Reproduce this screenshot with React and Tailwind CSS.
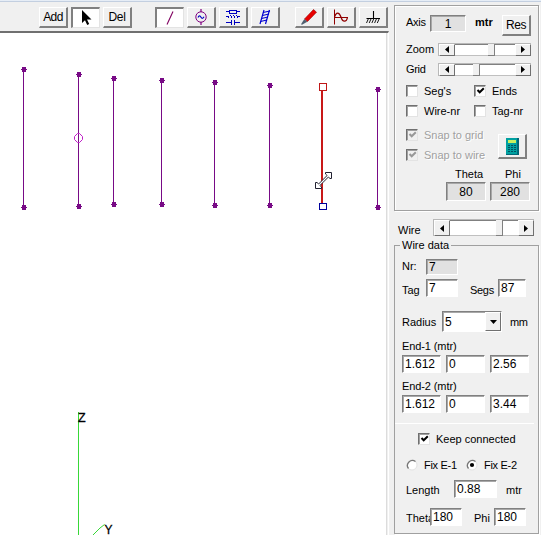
import React from 'react';

const wires = [
    { x: 24, top: 69, bottom: 207 },
    { x: 79, top: 74, bottom: 206 },
    { x: 114, top: 78, bottom: 204 },
    { x: 162, top: 80, bottom: 204 },
    { x: 215, top: 82, bottom: 205 },
    { x: 270, top: 85, bottom: 205 },
    { x: 378, top: 89, bottom: 207 },
];

const ToolButton = ({ pressed, className = '', children }) => (
    <button
        className={`flex h-[21px] w-[29px] shrink-0 items-center justify-center border ${
            pressed
                ? 'border-t-2 border-l-2 border-t-[#808080] border-l-[#808080] border-r-[#e3e3e3] border-b-[#e3e3e3] bg-white'
                : 'border-r-2 border-b-2 border-t-white border-l-white border-r-[#808080] border-b-[#808080] bg-[#f0f0f0]'
        } ${className}`}
    >
        {children}
    </button>
);

const Icon = ({ children, smooth }) => (
    <svg width="24" height="18" viewBox="0 0 24 18" fill="none" shapeRendering={smooth ? 'auto' : 'crispEdges'} className="shrink-0">
        {children}
    </svg>
);

const Field = ({ className = '', readOnly, children }) => (
    <div
        className={`flex shrink-0 items-center overflow-hidden border border-t-[#808080] border-l-[#808080] border-r-white border-b-white text-[12px] shadow-[inset_1px_1px_0_#a8a8a8] ${
            readOnly ? 'bg-[#e1e1e1]' : 'bg-white'
        } ${className}`}
    >
        {children}
    </div>
);

const Arrow = ({ dir }) => (
    <span className="flex w-4 shrink-0 items-center justify-center border border-t-white border-l-white border-r-[#707070] border-b-[#707070] bg-[#f0f0f0]">
        <svg width="4" height="7" viewBox="0 0 4 7">
            <path d={dir === 'left' ? 'M4 0V7L0 3.5Z' : 'M0 0V7L4 3.5Z'} fill="#000" />
        </svg>
    </span>
);

const Scrollbar = ({ className, before }) => (
    <div className={`flex shrink-0 border-t border-l border-[#b8b8b8] bg-white ${className}`}>
        <Arrow dir="left" />
        <span className={`shrink-0 border-t border-b border-t-[#808080] border-b-[#c0c0c0] ${before}`} />
        <span className="w-[7px] shrink-0 border-r border-b border-[#808080] bg-[#f0f0f0]" />
        <span className="flex-1 border-t border-b border-t-[#808080] border-b-[#c0c0c0]" />
        <Arrow dir="right" />
    </div>
);

const Check = ({ checked, disabled, label, className = '' }) => (
    <label className={`flex h-[13px] shrink-0 items-center ${disabled ? 'text-[#a0a0a0] [text-shadow:1px_1px_0_#fff]' : ''} ${className}`}>
        <span
            className={`mr-[6px] flex h-[12px] w-[12px] shrink-0 items-center justify-center border border-t-[#707070] border-l-[#707070] border-r-[#e3e3e3] border-b-[#e3e3e3] shadow-[inset_1px_1px_0_#a0a0a0] ${
                disabled ? 'bg-[#f0f0f0]' : 'bg-white'
            }`}
        >
            {checked && (
                <svg width="9" height="9" viewBox="0 0 9 9" fill="none">
                    <path d="M1.5 4L3.7 6.3L7.8 2.2" stroke={disabled ? '#989898' : '#000'} strokeWidth="2" />
                </svg>
            )}
        </span>
        <span>{label}</span>
    </label>
);

const Radio = ({ checked, label, className = '' }) => (
    <label className={`flex h-[13px] shrink-0 items-center ${className}`}>
        <svg width="12" height="12" viewBox="0 0 12 12" className="mr-[6px]">
            <circle cx="6" cy="6" r="5" fill="#fff" stroke="#e3e3e3" />
            <path d="M2.5 9.5A5 5 0 0 1 9.5 2.5" fill="none" stroke="#777" strokeWidth="1.3" />
            {checked && <circle cx="6" cy="6" r="2.1" fill="#000" />}
        </svg>
        <span>{label}</span>
    </label>
);

const Toolbar = () => (
    <div className="flex h-[29px] w-[390px] shrink-0 items-start pt-[5px] pl-[39px]">
        <div className="flex gap-[3px]">
            <ToolButton><span className="text-[12px] leading-none tracking-[-0.6px]">Add</span></ToolButton>
            <ToolButton pressed>
                <Icon smooth>
                    <path d="M8 1V14L11 11.2L13.2 16L15.2 15L13 10.5H17.5Z" fill="#000" />
                </Icon>
            </ToolButton>
            <ToolButton><span className="text-[12px] leading-none tracking-[-0.4px]">Del</span></ToolButton>
        </div>
        <div className="ml-[23px] flex gap-[3px]">
            <ToolButton pressed>
                <Icon smooth><path d="M15 2.5L9 15.5" stroke="#800060" strokeWidth="1.1" /></Icon>
            </ToolButton>
            <ToolButton>
                <Icon smooth>
                    <circle cx="12" cy="9" r="5.2" stroke="#800080" strokeWidth="1" />
                    <path d="M12 1V4M12 14V17" stroke="#800080" strokeWidth="1.2" />
                    <path d="M9 9.5C10 7.5 11 7.5 12 9.2S14 10.5 15 8.7" stroke="#0000c0" strokeWidth="1.2" />
                </Icon>
            </ToolButton>
            <ToolButton>
                <Icon>
                    <path d="M5 3.5H9M16 3.5H19M5 8.5H8M16 8.5H19M5 14.5H10M14 14.5H19" stroke="#0000c0" />
                    <path d="M8.5 2.5H15.5V5.5H8.5Z" stroke="#0000c0" />
                    <path d="M7.5 10V8M9 7.5H10M10.5 8V10M12 7.5H13M13.5 8V10M15 7.5H16M16.5 8V10" stroke="#0000c0" />
                    <path d="M10.5 12V17M13.5 12V17" stroke="#0000c0" />
                </Icon>
            </ToolButton>
            <ToolButton>
                <Icon smooth>
                    <path d="M11 2L7 16M16.5 2L12.5 16" stroke="#0000d0" strokeWidth="1.2" />
                    <path d="M10 4.5L17 3M9.5 7.5L16 6M8.5 10.5L15 9M7.5 13.5L14 12" stroke="#0000d0" strokeWidth="1.1" />
                </Icon>
            </ToolButton>
        </div>
        <div className="ml-[15px] flex gap-[3px]">
            <ToolButton>
                <Icon smooth>
                    <path d="M16.5 1.5L19.5 4.2L10.5 13.5L7.5 11Z" fill="#e80000" stroke="#900" strokeWidth=".6" />
                    <path d="M7.3 11L10.3 13.7L5 16.8L4 16.3Z" fill="#506070" />
                </Icon>
            </ToolButton>
            <ToolButton>
                <Icon smooth>
                    <path d="M5.5 1.5V16.5M5.5 9.5H19" stroke="#900000" />
                    <path d="M5.5 9C7 4 10 3.5 12 9C13.5 14.5 17.5 14.5 18.5 9.5" stroke="#900000" strokeWidth="1.2" />
                </Icon>
            </ToolButton>
            <ToolButton>
                <Icon smooth>
                    <path d="M12.5 3V10M5.5 10.5H19" stroke="#000" strokeWidth="1.1" />
                    <path d="M7.5 10.5L5.5 15M10.2 10.5L8.2 15M12.9 10.5L10.9 15M15.6 10.5L13.6 15M18.3 10.5L16.3 15" stroke="#000" strokeWidth=".9" />
                </Icon>
            </ToolButton>
        </div>
    </div>
);

const Drawing = () => (
    <svg width="386" height="502" viewBox="0 33 386 502" className="block shrink-0">
        {wires.map((w) => (
            <g key={w.x} fill="#780a86">
                <rect x={w.x - 1} y={w.top} width="1" height={w.bottom - w.top} />
                <path d={`M${w.x - 3} ${w.top}h6v1h-6zM${w.x - 2} ${w.top - 2}h4v5h-4z`} />
                <path d={`M${w.x - 3} ${w.bottom}h6v1h-6zM${w.x - 2} ${w.bottom - 2}h4v5h-4z`} />
            </g>
        ))}
        <path d="M77.5 133.5H79.5L82.5 136.5V139.5L79.5 142.5H77.5L74.5 139.5V136.5Z" fill="none" stroke="#c020c8" />
        <rect x="321" y="90" width="2" height="114" fill="#c81818" />
        <rect x="319.5" y="83.5" width="7" height="7" fill="#fff" stroke="#c01818" />
        <rect x="319.5" y="203.5" width="7" height="6" fill="#fff" stroke="#00009c" />
        <path
            d="M325.5 172.5H331.5V178.5H330L328.4 177L319.9 185.5L321.5 187V188.5H315.5V182.5H317L318.6 184L327.1 175.5L325.5 174Z"
            fill="#fff"
            stroke="#202030"
            strokeWidth="1"
        />
        <rect x="78" y="412" width="1" height="123" fill="#38d838" />
        <path d="M93 535L100 528L104.5 524.5" fill="none" stroke="#38d838" />
        <text x="78" y="422" fontSize="12.5" stroke="#000" strokeWidth=".3">Z</text>
        <text x="104.5" y="533.5" fontSize="12" stroke="#000" strokeWidth=".3">Y</text>
    </svg>
);

const ViewPanel = () => (
    <div className="h-[206px] w-[145px] shrink-0 border border-[#a0a0a0] shadow-[inset_1px_1px_0_#fff,1px_1px_0_#fff]">
        <div className="mt-[9px] flex h-[22px] pl-[11px]">
            <span className="w-6 tracking-[-0.3px]">Axis</span>
            <Field readOnly className="h-[17px] w-[36px] justify-center">1</Field>
            <b className="ml-[9px] w-[27px]">mtr</b>
            <ToolButton><span className="text-[12px] leading-none tracking-[-0.4px]">Res</span></ToolButton>
        </div>
        <div className="mt-[5px] flex h-[14px] items-center pl-[11px]">
            <span className="w-8">Zoom</span>
            <Scrollbar className="h-[13px] w-[93px]" before="w-[33px]" />
        </div>
        <div className="mt-[6px] flex h-[14px] items-center pl-[11px]">
            <span className="w-8 tracking-[-0.3px]">Grid</span>
            <Scrollbar className="h-[13px] w-[93px]" before="w-[18px]" />
        </div>
        <div className="mt-[8px] flex pl-[11px]">
            <Check label="Seg's" className="w-[68px]" />
            <Check label="Ends" checked />
        </div>
        <div className="mt-[7px] flex pl-[11px]">
            <Check label="Wire-nr" className="w-[68px]" />
            <Check label="Tag-nr" />
        </div>
        <div className="mt-[11px] flex pl-[11px]">
            <div className="flex w-[92px] flex-col gap-[7px]">
                <Check label="Snap to grid" checked disabled />
                <Check label="Snap to wire" checked disabled />
            </div>
            <ToolButton className="mt-[6px] h-[25px]!">
                <svg width="13" height="17" viewBox="0 0 13 17" shapeRendering="crispEdges">
                    <rect width="13" height="17" fill="#006878" />
                    <rect width="11" height="16" fill="#00a0a0" />
                    <rect x="2" y="2" width="8" height="3" fill="#c8f060" />
                    <path d="M2 7.5H10M2 9.5H10M2 11.5H10M2 13.5H10" stroke="#005060" strokeDasharray="2 1" />
                </svg>
            </ToolButton>
        </div>
        <div className="mt-[6px] flex h-[14px] items-center pl-[60px]">
            <span className="w-[50px]">Theta</span>
            <span>Phi</span>
        </div>
        <div className="mt-px flex gap-1 pl-[51px]">
            <Field readOnly className="h-[19px] w-10 justify-center">80</Field>
            <Field readOnly className="h-[19px] w-10 justify-center">280</Field>
        </div>
    </div>
);

const EndPoint = ({ label, values }) => (
    <>
        <span className="flex h-[14px] items-center tracking-[-0.1px]">{label}</span>
        <div className="mt-[2px] flex gap-[5px]">
            {values.map((v, i) => (
                <Field key={i} className="h-[18px] w-[39px] pl-[2px]">{v}</Field>
            ))}
        </div>
    </>
);

const WireData = () => (
    <fieldset className="h-[295px] w-[145px] min-w-0 shrink-0 border border-[#a0a0a0] shadow-[1px_1px_0_#fff]">
        <legend className="ml-[5px] h-[13px] px-[2px] leading-[13px]">Wire data</legend>
        <div className="mt-[7px] flex pl-[7px]">
            <span className="w-[24px]">Nr:</span>
            <Field readOnly className="h-[16px] w-8 pl-[2px]">7</Field>
        </div>
        <div className="mt-[4px] flex h-[18px] items-center pl-[7px]">
            <span className="w-[24px] pt-[3px]">Tag</span>
            <Field className="h-[18px] w-8 pl-[2px]">7</Field>
            <span className="ml-[12px] w-[28px] pt-[3px] tracking-[-0.3px]">Segs</span>
            <Field className="h-[18px] w-7 pl-[2px]">87</Field>
        </div>
        <div className="mt-[14px] flex h-[21px] items-center pl-[7px]">
            <span className="w-[40px] pt-px">Radius</span>
            <Field className="h-[21px] w-[60px] justify-between pl-[2px]">
                5
                <span className="flex h-full w-4 items-center justify-center border border-t-white border-l-white border-r-[#707070] border-b-[#707070] bg-[#f0f0f0]">
                    <svg width="7" height="4" viewBox="0 0 7 4"><path d="M0 0H7L3.5 4Z" fill="#000" /></svg>
                </span>
            </Field>
            <span className="ml-[8px] tracking-[-0.5px]">mm</span>
        </div>
        <div className="mt-[7px] pl-[7px]">
            <EndPoint label="End-1 (mtr)" values={['1.612', '0', '2.56']} />
            <div className="h-[6px]" />
            <EndPoint label="End-2 (mtr)" values={['1.612', '0', '3.44']} />
        </div>
        <div className="mt-[10px] mr-[4px] border-t border-white" />
        <Check label="Keep connected" checked className="mt-[8px] ml-[23px]" />
        <div className="mt-[13px] flex pl-[11px]">
            <Radio label="Fix E-1" className="w-[60px] tracking-[-0.3px]" />
            <Radio label="Fix E-2" checked className="tracking-[-0.3px]" />
        </div>
        <div className="mt-[9px] flex h-[18px] items-center pl-[11px]">
            <span className="w-[48px] pt-px">Length</span>
            <Field className="h-[18px] w-[43px] pl-[2px]">0.88</Field>
            <span className="ml-[9px] pt-px">mtr</span>
        </div>
        <div className="mt-[10px] flex h-[18px] items-center pl-[11px]">
            <span className="w-[24px] overflow-hidden pt-[2px]">Theta</span>
            <Field className="h-[18px] w-8 pl-[2px]">180</Field>
            <span className="ml-[12px] w-[20px] pt-[2px]">Phi</span>
            <Field className="h-[18px] w-8 pl-[2px]">180</Field>
        </div>
    </fieldset>
);

const App = () => (
    <div className="flex h-[535px] w-[541px] flex-col overflow-hidden bg-[#f0f0f0] font-['Liberation_Sans',Arial,sans-serif] text-[11px] leading-[14px] text-black">
        <div className="h-[2px] shrink-0 border-b border-[#c3cfe0] bg-[#e6edf6]" />
        <div className="flex">
            <div className="flex w-[390px] shrink-0 flex-col">
                <Toolbar />
                <div className="w-[389px] border-t-2 border-r border-t-[#707070] border-r-white">
                    <div className="w-[387px] border-r border-[#dcdcdc] bg-white">
                        <Drawing />
                    </div>
                </div>
            </div>
            <div className="flex flex-col pt-[3px] pl-[4px]">
                <ViewPanel />
                <div className="mt-[8px] mb-[3px] flex h-[17px] items-center pl-[4px]">
                    <span className="w-[35px] pt-[5px]">Wire</span>
                    <Scrollbar className="h-[17px] w-[101px]" before="w-[46px]" />
                </div>
                <WireData />
            </div>
        </div>
    </div>
);

export default App;
